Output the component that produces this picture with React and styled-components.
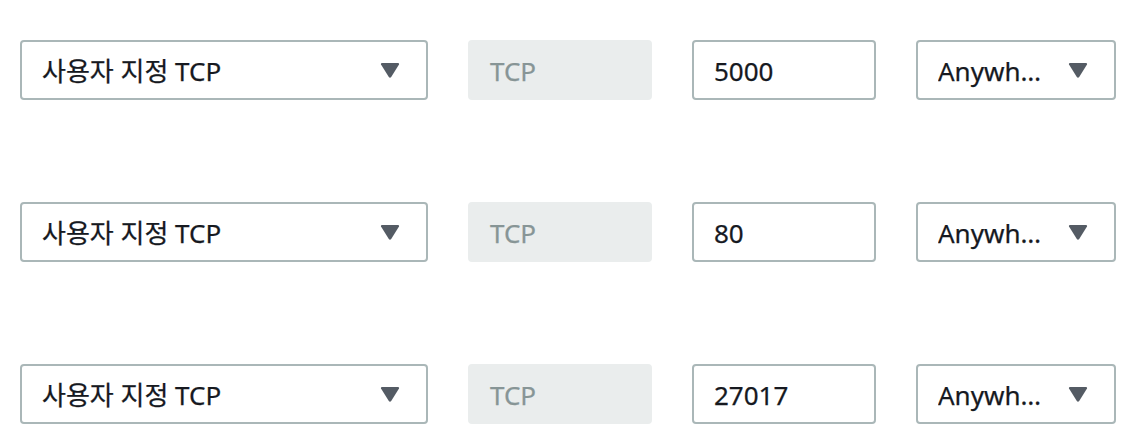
import React from "react";
import styled, { createGlobalStyle } from "styled-components";

const Global = createGlobalStyle`
  html, body { margin: 0; padding: 0; background: #ffffff; }
  body { font-family: "Noto Sans", "Noto Sans CJK KR", sans-serif; color: #16191f; }
  * { box-sizing: border-box; }
`;

const Page = styled.div`
  display: flex;
  flex-direction: column;
  gap: 102px;
  padding: 40px 0 0 20px;
  width: 1140px;
  height: 440px;
`;

const Row = styled.div`
  display: flex;
  gap: 40px;
  align-items: center;
`;

const Field = styled.div`
  display: flex;
  align-items: center;
  height: 60px;
  width: ${(p) => p.$w}px;
  padding: 0 26px 0 20px;
  border: 2px solid #aab7b8;
  border-radius: 4px;
  background: #ffffff;
  font-size: 26px;
  line-height: 36px;
  color: #16191f;
  -webkit-text-stroke: 0.25px currentColor;
`;

const Disabled = styled(Field)`
  border-color: #eaeded;
  background: #eaeded;
  color: #879596;
`;

const Label = styled.span`
  flex: 1 1 auto;
  white-space: nowrap;
  padding-top: 2px;
`;

const Truncated = styled.span`
  flex: 0 0 auto;
  width: ${(p) => p.$w}px;
  white-space: nowrap;
  overflow: hidden;
  text-overflow: ellipsis;
  padding-top: 2px;
`;

const Caret = styled.svg`
  flex: 0 0 auto;
  width: 20px;
  height: 15px;
  margin-left: auto;
`;

const Arrow = () => (
  <Caret viewBox="0 0 20 15">
    <path d="M1 1.5 Q0.5 0 2.2 0 L17.8 0 Q19.5 0 19 1.5 L11.2 14 Q10 15.5 8.8 14 Z" fill="#545b64" />
  </Caret>
);

const rows = ["5000", "80", "27017"];

export default function App() {
  return (
    <>
      <Global />
      <Page>
        {rows.map((port) => (
          <Row key={port}>
            <Field $w={408}>
              <Label>사용자 지정 TCP</Label>
              <Arrow />
            </Field>
            <Disabled $w={184}>
              <Label>TCP</Label>
            </Disabled>
            <Field $w={184}>
              <Label>{port}</Label>
            </Field>
            <Field $w={200}>
              <Truncated $w={116}>Anywhere</Truncated>
              <Arrow />
            </Field>
          </Row>
        ))}
      </Page>
    </>
  );
}
